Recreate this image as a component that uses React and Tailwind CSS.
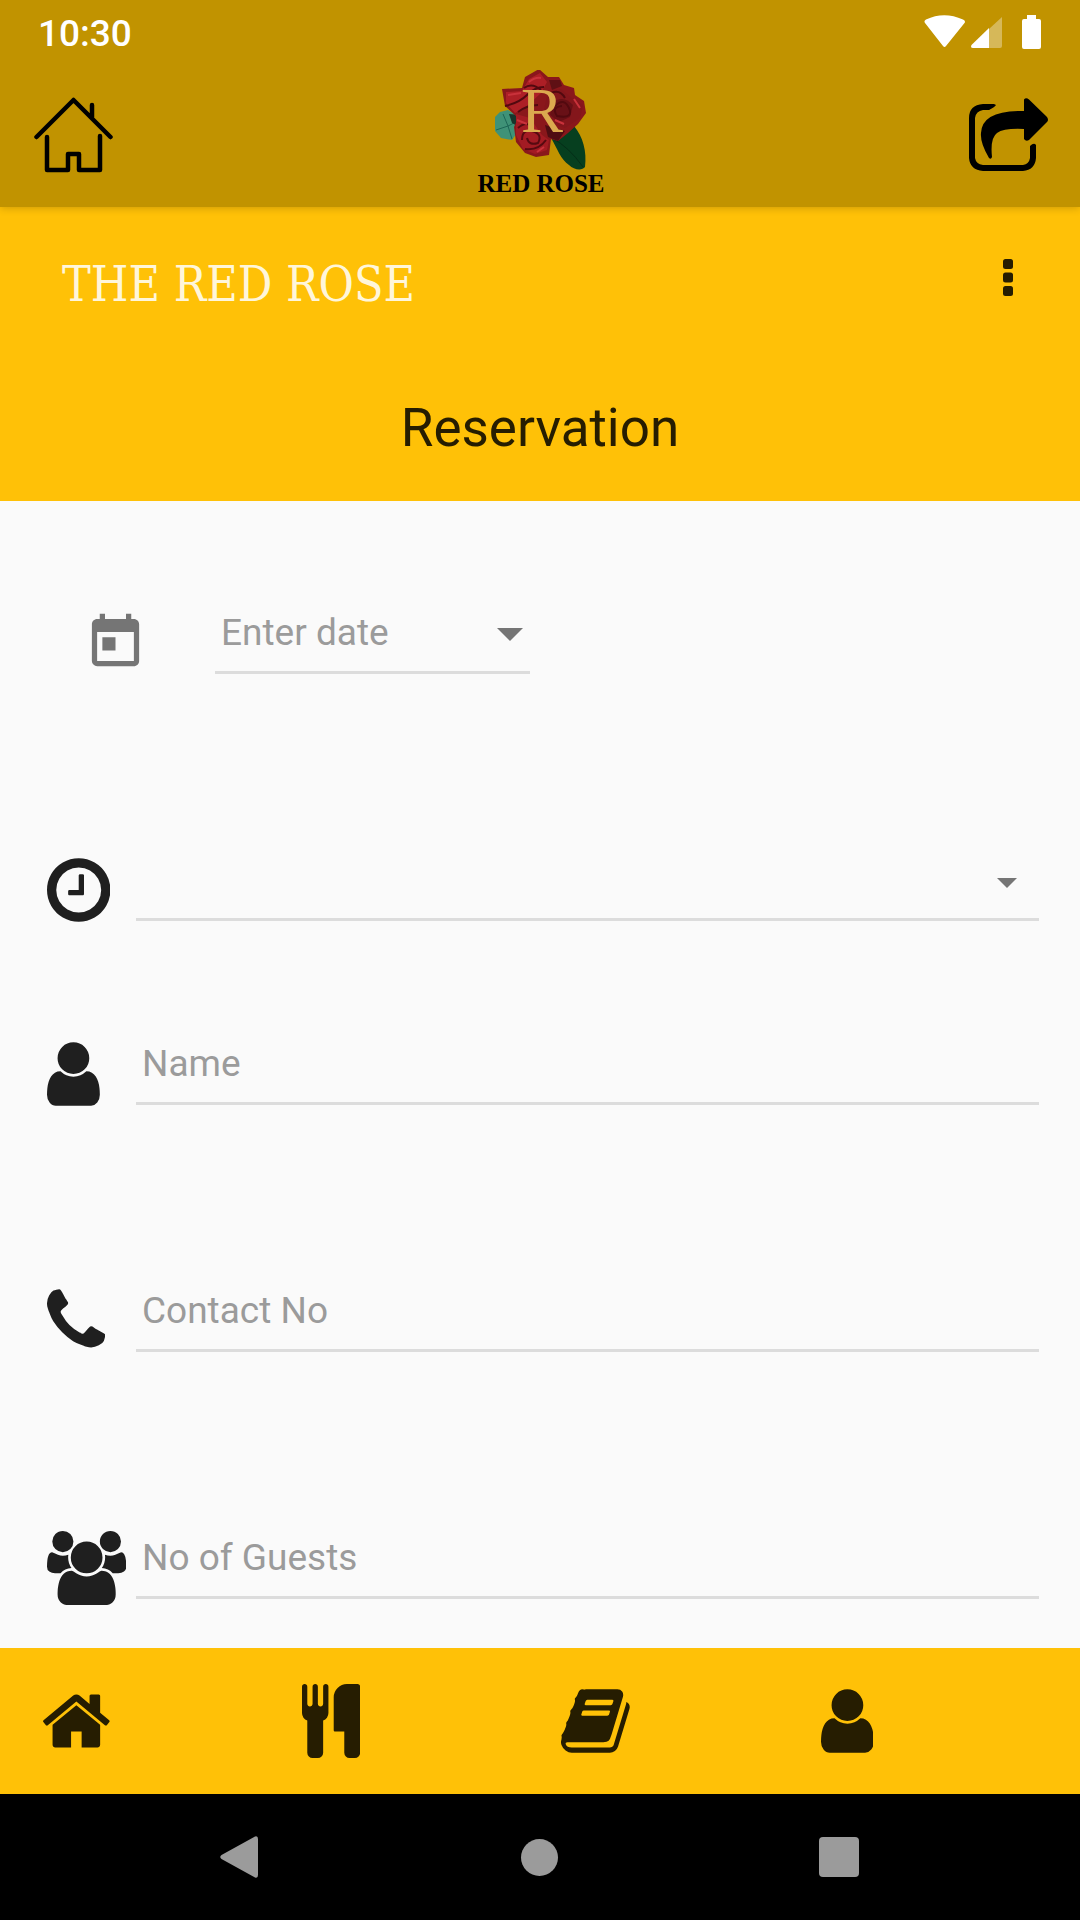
import React, { useState } from 'react';
import { MdToday } from 'react-icons/md';

// Font Awesome 4 glyphs, drawn on a 1792 unit high grid
const glyphs = {
  clock: {
    box: '128 0 1536 1792',
    d: 'M1024 544v448q0 14-9 23t-23 9h-320q-14 0-23-9t-9-23v-64q0-14 9-23t23-9h224v-352q0-14 9-23t23-9h64q14 0 23 9t9 23zm416 352q0-148-73-273t-198-198-273-73-273 73-198 198-73 273 73 273 198 198 273 73 273-73 198-198 73-273zm224 0q0 209-103 385.5t-279.5 279.5-385.5 103-385.5-103-279.5-279.5-103-385.5 103-385.5 279.5-279.5 385.5-103 385.5 103 279.5 279.5 103 385.5z'
  },
  user: {
    box: '256 0 1280 1792',
    d: 'M1536 1399q0 109-62.5 187t-150.5 78h-854q-88 0-150.5-78t-62.5-187q0-85 8.5-160.5t31.5-152 58.5-131 94-89 134.5-34.5q131 128 313 128t313-128q76 0 134.5 34.5t94 89 58.5 131 31.5 152 8.5 160.5zm-256-887q0 159-112.5 271.5t-271.5 112.5-271.5-112.5-112.5-271.5 112.5-271.5 271.5-112.5 271.5 112.5 112.5 271.5z'
  },
  phone: {
    box: '192 0 1408 1792',
    d: 'M1600 1240q0 27-10 70.5t-21 68.5q-21 50-122 106-94 51-186 51-27 0-53-3.5t-57.5-12.5-47-14.5-55.5-20.5-49-18q-98-35-175-83-127-79-264-216t-216-264q-48-77-83-175-3-9-18-49t-20.5-55.5-14.5-47-12.5-57.5-3.5-53q0-92 51-186 56-101 106-122 25-11 68.5-21t70.5-10q14 0 21 3 18 6 53 76 11 19 30 54t35 63.5 31 53.5q3 4 17.5 25t21.5 35.5 7 28.5q0 20-28.5 50t-62 55-62 53-28.5 46q0 9 5 22.5t8.5 20.5 14 24 11.5 19q76 137 174 235t235 174q2 1 19 11.5t24 14 20.5 8.5 22.5 5q18 0 46-28.5t53-62 55-62 50-28.5q14 0 28.5 7t35.5 21.5 25 17.5q25 15 53.5 31t63.5 35 54 30q70 35 76 53 3 7 3 21z'
  },
  users: {
    box: '64 0 1920 1792',
    d: 'M657 896q-162 5-265 128h-134q-82 0-138-40.5t-56-118.5q0-353 124-353 6 0 43.5 21t97.5 42.5 119 21.5q67 0 133-23-5 37-5 66 0 139 81 256zm1071 637q0 120-73 189.5t-194 69.5h-874q-121 0-194-69.5t-73-189.5q0-53 3.5-103.5t14-109 26.5-108.5 43-97.5 62-81 85.5-53.5 111.5-20q10 0 43 21.5t73 48 107 48 135 21.5 135-21.5 107-48 73-48 43-21.5q61 0 111.5 20t85.5 53.5 62 81 43 97.5 26.5 108.5 14 109 3.5 103.5zm-1024-1277q0 106-75 181t-181 75-181-75-75-181 75-181 181-75 181 75 75 181zm704 384q0 159-112.5 271.5t-271.5 112.5-271.5-112.5-112.5-271.5 112.5-271.5 271.5-112.5 271.5 112.5 112.5 271.5zm576 225q0 78-56 118.5t-138 40.5h-134q-103-123-265-128 81-117 81-256 0-29-5-66 66 23 133 23 59 0 119-21.5t97.5-42.5 43.5-21q124 0 124 353zm-128-609q0 106-75 181t-181 75-181-75-75-181 75-181 181-75 181 75 75 181z'
  },
  home: {
    box: '64 0 1664 1792',
    d: 'M1472 992v480q0 26-19 45t-45 19h-384v-384h-256v384h-384q-26 0-45-19t-19-45v-480q0-1 .5-3t.5-3l575-474 575 474q1 2 1 6zm223-69l-62 74q-8 9-21 11h-3q-13 0-21-7l-692-577-692 577q-12 8-24 7-13-2-21-11l-62-74q-8-10-7-23.5t11-21.5l719-599q32-26 76-26t76 26l244 204v-195q0-14 9-23t23-9h192q14 0 23 9t9 23v408l219 182q10 8 11 21.5t-7 23.5z'
  },
  cutlery: {
    box: '192 0 1408 1792',
    d: 'M832 64v640q0 61-35.5 111t-92.5 70v779q0 52-38 90t-90 38h-128q-52 0-90-38t-38-90v-779q-57-20-92.5-70t-35.5-111v-640q0-26 19-45t45-19 45 19 19 45v416q0 26 19 45t45 19 45-19 19-45v-416q0-26 19-45t45-19 45 19 19 45v416q0 26 19 45t45 19 45-19 19-45v-416q0-26 19-45t45-19 45 19 19 45zm768 0v1600q0 52-38 90t-90 38h-128q-52 0-90-38t-38-90v-512h-224q-13 0-22.5-9.5t-9.5-22.5v-800q0-132 94-226t226-94h256q26 0 45 19t19 45z'
  },
  book: {
    box: '64 0 1664 1792',
    d: 'M1703 478q40 57 18 129l-275 906q-19 64-76.5 107.5t-122.5 43.5h-923q-77 0-148.5-53.5t-99.5-131.5q-24-67-2-127 0-4 3-27t4-37q1-8-3-21.5t-3-19.5q2-11 8-21t16.5-23.5 16.5-23.5q23-38 45-91.5t30-91.5q3-10 .5-30t-.5-28q3-11 17-28t17-23q21-36 42-92t25-90q1-9-2.5-32t.5-28q4-13 22-30.5t22-22.5q19-26 42.5-84.5t27.5-96.5q1-8-3-25.5t-2-26.5q2-8 9-18t18-23 17-21q8-12 16.5-30.5t15-35 16-36 19.5-32 26.5-23.5 36-11.5 47.5 5.5l-1 3q38-9 51-9h761q74 0 114 56t18 130l-274 906q-36 119-71.5 153.5t-128.5 34.5h-869q-27 0-38 15-11 16-1 43 24 70 144 70h923q29 0 56-15.5t35-41.5l300-987q7-22 5-57 38 15 59 43zm-1064 2q-4 13 2 22.5t20 9.5h608q13 0 25.5-9.5t16.5-22.5l21-64q4-13-2-22.5t-20-9.5h-608q-13 0-25.5 9.5t-16.5 22.5zm-83 256q-4 13 2 22.5t20 9.5h608q13 0 25.5-9.5t16.5-22.5l21-64q4-13-2-22.5t-20-9.5h-608q-13 0-25.5 9.5t-16.5 22.5z'
  }
};

const Glyph = ({ name }) => (
  <svg viewBox={glyphs[name].box} className="h-[74px] w-auto" fill="currentColor" aria-hidden="true">
    <path d={glyphs[name].d} />
  </svg>
);

const StatusBar = () => (
  <div className="flex h-[63px] items-center justify-between pl-[38px] pr-[39px] text-white">
    <span className="pt-1 text-[37px] font-medium leading-10">10:30</span>
    <svg viewBox="0 0 117 34" className="h-[34px] w-[117px]" fill="currentColor" aria-hidden="true">
      <path d="M1 8Q-.5 6 2 4.500Q20-4 39 4.500Q42 6 40.500 8L22 31Q20.500 33 19 31Z" />
      <path d="M78 2L65 14V33H76Q78 33 78 31Z" opacity=".35" />
      <path d="M65 13L47.500 30Q46 33 49 33H65Z" />
      <path d="M103 0H112V4H115Q117 4 117 6V32Q117 34 115 34H100Q98 34 98 32V6Q98 4 100 4H103Z" />
    </svg>
  </div>
);

const Rose = () => (
  <svg viewBox="0 1 160 102" className="h-[102px] w-[160px]" aria-hidden="true">
    {/* leaves */}
    <path d="M90 69C96 68 108 63 113 57C122 68 126 82 124 98C121 102 113 101 108 96C100 91 96 79 90 69Z" fill="#063f1f" />
    <path d="M91 69Q108 78 122 98" stroke="#042d17" fill="none" />
    <path d="M34 48L39 43L47 41L59 48L60 58L51 71L40 69L34 62Z" fill="#3f9277" />
    <path d="M35 61L47 57M47 57L42 45M47 57L51 70M47 57L57 52" stroke="#1c6656" fill="none" />
    <path d="M48 45L60 46L58 58L51 54Z" fill="#17362c" />
    {/* petals */}
    <path d="M41 20L61 19L64 8L78 0L87 8L98 8L103 16L113 19L114 26L123 32L125 44L117 55L107 64L97 72L90 70L88 86L75 88L64 84L55 73L53 58L57 49L44 37Z" fill="#8a171b" />
    <path d="M45 23L61 22L68 10L79 4L86 13L80 24L64 39L54 44L45 34Z" fill="#ad1f26" />
    <path d="M55 45L69 49L81 66L88 71L86 81L74 85L62 80L55 66Z" fill="#a31b23" />
    <path d="M87 23L100 20L111 29L122 36L119 49L104 59L92 54L83 40Z" fill="#84161b" />
    <path d="M91 34Q102 25 112 36L109 48L98 53L89 46Z" fill="#681016" />
    <path d="M88 11L99 11L101 17L91 21Z" fill="#5f1014" />
    <path d="M84 56L104 62L97 72L87 68Z" fill="#4f0d12" />
    <path d="M44 37Q58 34 66 26T83 18M57 43Q66 36 77 36M63 19Q71 13 80 21M90 24Q99 20 104 29M94 37Q103 28 108 39T96 47Q90 38 101 37" stroke="#52090f" strokeWidth="2" fill="none" />
    <path d="M57 59Q66 51 72 59M61 71Q61 60 71 62Q82 65 77 74Q68 77 66 69M64 80Q77 82 85 71" stroke="#560a10" strokeWidth="2" fill="none" />
    <path d="M47 26L60 24M68 13Q74 8 80 9M56 51L66 55M83 78L76 83M113 30L119 39M94 51L103 55" stroke="#c9323b" strokeWidth="2" fill="none" />
    <text x="60" y="63" fill="#dba94f" fontFamily="Liberation Serif, serif" fontSize="63">R</text>
  </svg>
);

const Arrow = ({ className }) => (
  <svg viewBox="0 0 26 13" className={className} fill="#757575" aria-hidden="true">
    <path d="M0 0H26L13 13Z" />
  </svg>
);

const Field = ({ id, icon, label, children }) => (
  <div className="flex items-start">
    <label htmlFor={id} aria-label={label} className="w-[89px] shrink-0">
      <Glyph name={icon} />
    </label>
    {children || (
      <input
        id={id}
        type="text"
        placeholder={label}
        className="h-[68px] min-w-0 flex-1 border-b-3 border-[#dcdcdc] bg-transparent px-1.5 pb-3 text-[37px] outline-none placeholder:text-[#9b9b9b]"
      />
    )}
  </div>
);

const tabs = ['home', 'cutlery', 'book', 'user'];

const App = () => {
  const [date, setDate] = useState('');
  const [time, setTime] = useState('');

  return (
    <div className="flex min-h-screen flex-col bg-[#fafafa] font-[Roboto,sans-serif] text-[#1f1f1f]">
      <header className="relative bg-[#c19300] shadow-[0_1px_8px_rgba(0,0,0,0.2)]">
        <StatusBar />
        <div className="flex h-36 items-center justify-between pl-[34px] pr-8 text-black">
          <button type="button" aria-label="Home">
            <svg viewBox="0 0 79 76" className="h-[76px] w-[79px]" fill="none" stroke="currentColor" strokeWidth="4.500" strokeLinecap="round" strokeLinejoin="round">
              <path d="M2.500 40L39.500 3L76.500 40M58 8V20M13 40V73H34V57H45V73H66V39" />
            </svg>
          </button>
          <div className="flex flex-col items-center pb-1">
            <Rose />
            <span className="font-['Liberation_Serif',serif] text-[25px] font-bold leading-6">RED ROSE</span>
          </div>
          <button type="button" aria-label="Share">
            <svg viewBox="0 0 79 74" className="h-[74px] w-[79px]" fill="currentColor">
              <path d="M25 6H14Q0 7 0 20V60Q1 72 14 73H54Q66 72 67 60V47Q65 44 61 48V60Q60 66 54 67H14Q7 66 6 60V20Q7 13 14 12H20Q26 9 27 7Z" />
              <path d="M55 1.500Q57-1 60 1.500L78 19Q80 22 78 24L60 42Q57 44 55 41V31Q35 30 28 35Q21 40 23 59Q22 62 20 60Q11 45 12 35Q13 12 55 13Z" />
            </svg>
          </button>
        </div>
      </header>

      <section className="bg-[#ffc107] text-[#261d01]">
        <div className="flex h-[141px] items-center justify-between pl-[62px] pr-[67px]">
          <span className="pt-3 font-['DejaVu_Serif_Condensed','DejaVu_Serif',serif] text-5xl text-[#fff6da]">THE RED ROSE</span>
          <button type="button" aria-label="Menu">
            <svg viewBox="0 0 10 37" className="h-[37px] w-[10px]" fill="currentColor">
              <rect width="10" height="10" rx="2.500" />
              <rect y="13.500" width="10" height="10" rx="2.500" />
              <rect y="27" width="10" height="10" rx="2.500" />
            </svg>
          </button>
        </div>
        <h1 className="flex h-[153px] items-center justify-center pt-2 text-[53px]">Reservation</h1>
      </section>

      <main className="flex-1 pb-[42px] pl-[47px] pr-[41px] pt-[110px]">
        <form>
          <div className="flex items-start pl-[37px]">
            <label htmlFor="date" aria-label="Date" className="w-[131px] shrink-0 text-[#757575]">
              <MdToday className="size-[63px]" />
            </label>
            <div className="relative w-[315px]">
              <select
                id="date"
                value={date}
                onChange={(e) => setDate(e.target.value)}
                className="h-[63px] w-full appearance-none border-b-3 border-[#dcdcdc] bg-transparent px-1.5 pb-4 text-[37px] leading-10 text-[#9b9b9b] outline-none"
              >
                <option value="">Enter date</option>
                <option value="today">Today</option>
                <option value="tomorrow">Tomorrow</option>
              </select>
              <Arrow className="pointer-events-none absolute right-[7px] top-[17px] h-[13px] w-[26px]" />
            </div>
          </div>

          <div className="mt-[179px]">
            <Field id="time" icon="clock" label="Time">
              <div className="relative flex-1">
                <select
                  id="time"
                  value={time}
                  onChange={(e) => setTime(e.target.value)}
                  className="h-[68px] w-full appearance-none border-b-3 border-[#dcdcdc] bg-transparent px-1.5 pb-4 text-[37px] leading-10 outline-none"
                >
                  <option value=""></option>
                  <option value="lunch">12:00</option>
                  <option value="dinner">19:00</option>
                </select>
                <Arrow className="pointer-events-none absolute right-[22px] top-[25px] h-[10px] w-[20px]" />
              </div>
            </Field>
          </div>

          <div className="mt-[110px] flex flex-col gap-[173px]">
            <Field id="name" icon="user" label="Name" />
            <Field id="contact" icon="phone" label="Contact No" />
            <Field id="guests" icon="users" label="No of Guests" />
          </div>
        </form>
      </main>

      <nav className="grid h-[146px] grid-cols-4 items-center bg-[#ffc107] pl-[42px] text-[#261d01]">
        {tabs.map((tab) => (
          <button key={tab} type="button" aria-label={tab} className="justify-self-start">
            <Glyph name={tab} />
          </button>
        ))}
      </nav>

      <div className="grid h-[126px] grid-cols-3 place-items-center bg-black pl-[89px] pr-[91px] text-[#9b9b9b]">
        <button type="button" aria-label="Back">
          <svg viewBox="0 0 38 42" className="h-[42px] w-[38px]" fill="currentColor">
            <path d="M35 .5Q38-.5 38 3V39Q38 42.500 35 41.500L1.500 23Q-1 21 1.500 19Z" />
          </svg>
        </button>
        <button type="button" aria-label="Home screen" className="size-[37px] rounded-full bg-current" />
        <button type="button" aria-label="Recent apps" className="size-10 rounded-sm bg-current" />
      </div>
    </div>
  );
};

export default App;
